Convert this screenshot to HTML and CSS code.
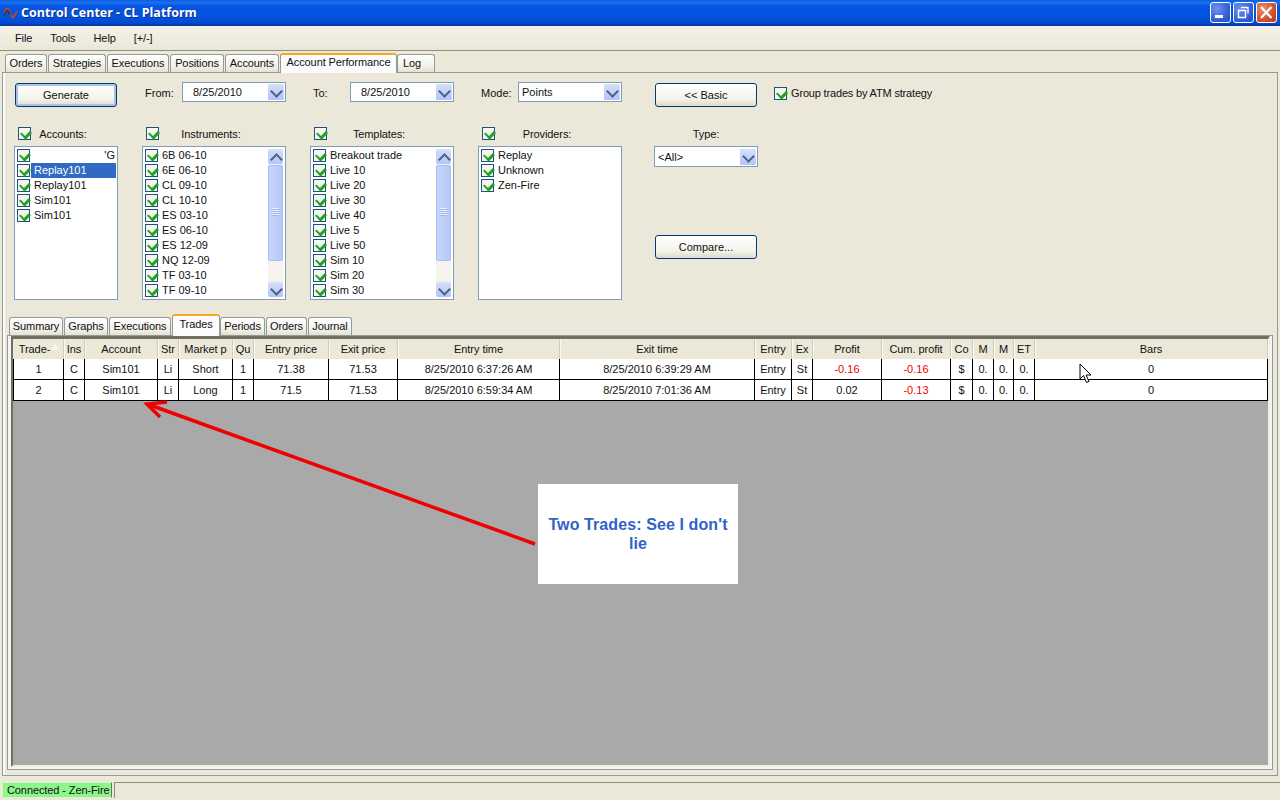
FILE: index.html

```html
<!DOCTYPE html>
<html lang="en">
<head>
    <meta charset="UTF-8">
    <title>Control Center - CL Platform</title>
    <link rel="stylesheet" href="styles.css">
</head>
<body>
<div class="window">
    <div class="titlebar">
        <svg class="app-icon" width="16" height="14" viewBox="0 0 16 14"><path d="M1 8C3 1 5 1 7 7s4 6 7-2" fill="none" stroke="#b5453a" stroke-width="2"/><path d="M1 10C3 3 5 3 7 9" fill="none" stroke="#2b2f55" stroke-width="1.5"/></svg>
        <span class="title-text">Control Center - CL Platform</span>
        <div class="win-buttons">
            <div class="win-btn"><svg width="21" height="21" viewBox="0 0 21 21"><rect x="5" y="13" width="8" height="3" fill="#fff"/></svg></div>
            <div class="win-btn"><svg width="21" height="21" viewBox="0 0 21 21"><path d="M8 5.500h7v6M5.500 8.500h7v7h-7z" fill="none" stroke="#fff" stroke-width="1.400"/></svg></div>
            <div class="win-btn close"><svg width="21" height="21" viewBox="0 0 21 21"><path d="M5 5l10.500 11M15.500 5L5 16" stroke="#fff" stroke-width="2.200"/></svg></div>
        </div>
    </div>

    <div class="menubar">
        <span>File</span>
        <span>Tools</span>
        <span>Help</span>
        <span>[+/-]</span>
    </div>

    <div class="tabs main-tabs">
        <div class="tab">Orders</div>
        <div class="tab">Strategies</div>
        <div class="tab">Executions</div>
        <div class="tab">Positions</div>
        <div class="tab">Accounts</div>
        <div class="tab active">Account Performance</div>
        <div class="tab">Log</div>
    </div>

    <div class="page">
        <div class="filters">
            <div class="cell"><button class="btn default">Generate</button></div>
            <div class="cell field">
                <label>From:</label>
                <div class="combo"><span>8/25/2010</span><i class="drop"></i></div>
            </div>
            <div class="cell field">
                <label>To:</label>
                <div class="combo"><span>8/25/2010</span><i class="drop"></i></div>
            </div>
            <div class="cell field">
                <label>Mode:</label>
                <div class="combo plain"><span>Points</span><i class="drop"></i></div>
            </div>
            <div class="cell"><button class="btn">&lt;&lt; Basic</button></div>
            <div class="cell group-check"><i class="chk"></i><span>Group trades by ATM strategy</span></div>

            <div class="cell column">
                <div class="head"><i class="chk"></i><span>Accounts:</span></div>
                <div class="list">
                    <div class="row"><i class="chk"></i><span class="redact">'G</span></div>
                    <div class="row selected"><i class="chk"></i><span>Replay101</span></div>
                    <div class="row"><i class="chk"></i><span>Replay101</span></div>
                    <div class="row"><i class="chk"></i><span>Sim101</span></div>
                    <div class="row"><i class="chk"></i><span>Sim101</span></div>
                </div>
            </div>
            <div class="cell column">
                <div class="head"><i class="chk"></i><span>Instruments:</span></div>
                <div class="list">
                    <div class="rows">
                        <div class="row"><i class="chk"></i><span>6B 06-10</span></div>
                        <div class="row"><i class="chk"></i><span>6E 06-10</span></div>
                        <div class="row"><i class="chk"></i><span>CL 09-10</span></div>
                        <div class="row"><i class="chk"></i><span>CL 10-10</span></div>
                        <div class="row"><i class="chk"></i><span>ES 03-10</span></div>
                        <div class="row"><i class="chk"></i><span>ES 06-10</span></div>
                        <div class="row"><i class="chk"></i><span>ES 12-09</span></div>
                        <div class="row"><i class="chk"></i><span>NQ 12-09</span></div>
                        <div class="row"><i class="chk"></i><span>TF 03-10</span></div>
                        <div class="row"><i class="chk"></i><span>TF 09-10</span></div>
                    </div>
                    <div class="scrollbar"><i class="sb-btn up"></i><i class="sb-thumb"></i><i class="sb-btn"></i></div>
                </div>
            </div>
            <div class="cell column">
                <div class="head"><i class="chk"></i><span>Templates:</span></div>
                <div class="list">
                    <div class="rows">
                        <div class="row"><i class="chk"></i><span>Breakout trade</span></div>
                        <div class="row"><i class="chk"></i><span>Live 10</span></div>
                        <div class="row"><i class="chk"></i><span>Live 20</span></div>
                        <div class="row"><i class="chk"></i><span>Live 30</span></div>
                        <div class="row"><i class="chk"></i><span>Live 40</span></div>
                        <div class="row"><i class="chk"></i><span>Live 5</span></div>
                        <div class="row"><i class="chk"></i><span>Live 50</span></div>
                        <div class="row"><i class="chk"></i><span>Sim 10</span></div>
                        <div class="row"><i class="chk"></i><span>Sim 20</span></div>
                        <div class="row"><i class="chk"></i><span>Sim 30</span></div>
                    </div>
                    <div class="scrollbar"><i class="sb-btn up"></i><i class="sb-thumb"></i><i class="sb-btn"></i></div>
                </div>
            </div>
            <div class="cell column">
                <div class="head"><i class="chk"></i><span>Providers:</span></div>
                <div class="list">
                    <div class="row"><i class="chk"></i><span>Replay</span></div>
                    <div class="row"><i class="chk"></i><span>Unknown</span></div>
                    <div class="row"><i class="chk"></i><span>Zen-Fire</span></div>
                </div>
            </div>
            <div class="cell column">
                <div class="head centered"><span>Type:</span></div>
                <div class="combo type"><span>&lt;All&gt;</span><i class="drop"></i></div>
                <button class="btn compare">Compare...</button>
            </div>
        </div>

        <div class="tabs sub-tabs">
            <div class="tab">Summary</div>
            <div class="tab">Graphs</div>
            <div class="tab">Executions</div>
            <div class="tab active">Trades</div>
            <div class="tab">Periods</div>
            <div class="tab">Orders</div>
            <div class="tab">Journal</div>
        </div>

        <div class="subpage">
            <div class="grid">
                <div class="grid-row header">
                    <div>Trade-<i class="sort"></i></div><div>Ins</div><div>Account</div><div>Str</div><div>Market p</div><div>Qu</div><div>Entry price</div><div>Exit price</div><div>Entry time</div><div>Exit time</div><div>Entry</div><div>Ex</div><div>Profit</div><div>Cum. profit</div><div>Co</div><div>M</div><div>M</div><div>ET</div><div>Bars</div>
                </div>
                <div class="grid-row">
                    <div>1</div><div>C</div><div>Sim101</div><div>Li</div><div>Short</div><div>1</div><div>71.38</div><div>71.53</div><div>8/25/2010 6:37:26 AM</div><div>8/25/2010 6:39:29 AM</div><div>Entry</div><div>St</div><div class="loss">-0.16</div><div class="loss">-0.16</div><div>$</div><div>0.</div><div>0.</div><div>0.</div><div>0</div>
                </div>
                <div class="grid-row">
                    <div>2</div><div>C</div><div>Sim101</div><div>Li</div><div>Long</div><div>1</div><div>71.5</div><div>71.53</div><div>8/25/2010 6:59:34 AM</div><div>8/25/2010 7:01:36 AM</div><div>Entry</div><div>St</div><div>0.02</div><div class="loss">-0.13</div><div>$</div><div>0.</div><div>0.</div><div>0.</div><div>0</div>
                </div>
            </div>
        </div>
    </div>

    <div class="statusbar">
        <div class="status-conn">Connected - Zen-Fire</div>
        <div class="status-rest"></div>
    </div>

    <!-- annotation pasted over the screenshot -->
    <svg class="arrow" width="420" height="170" viewBox="0 0 420 170">
        <path d="M395 146L10 7" stroke="#f00000" stroke-width="3.500" fill="none"/>
        <path d="M27 4L7 6L20 19" stroke="#f00000" stroke-width="3.500" fill="none"/>
    </svg>
    <div class="note">Two Trades: See I don't lie</div>
    <svg class="cursor" width="13" height="21" viewBox="0 0 13 21"><path d="M1 1v15l3.500-3.500 3 7 2.500-1-3-6.500h5z" fill="#fff" stroke="#000"/></svg>
</div>
</body>
</html>
```

FILE: styles.css

```css
* {
    box-sizing: border-box;
}

html, body {
    margin: 0;
    padding: 0;
    height: 800px;
    overflow: hidden;
}

body {
    font-family: "Liberation Sans", Arial, sans-serif;
    font-size: 11px;
    color: #111;
    background-color: #ece9d8;
}

i {
    display: block;
    font-style: normal;
}

.window {
    position: relative;
    width: 1280px;
    height: 800px;
    background-color: #ece9d8;
}

/* title bar */
.titlebar {
    display: flex;
    align-items: center;
    height: 26px;
    padding: 0 3px 1px 3px;
    background: linear-gradient(#0a5be0 0%, #1a70f0 10%, #0555e0 25%, #0352dd 70%, #0448c8 90%, #02329f 100%);
}

.app-icon {
    margin-right: 2px;
}

.title-text {
    color: #fff;
    font-family: "Open Sans", sans-serif;
    font-weight: bold;
    font-size: 12.5px;
    text-shadow: 1px 1px 0 #0a2f90;
}

.win-buttons {
    display: flex;
    gap: 2px;
    margin-left: auto;
}

.win-btn {
    width: 21px;
    height: 21px;
    border: 1px solid #fff;
    border-radius: 3px;
    overflow: hidden;
    background: radial-gradient(circle at 30% 30%, #6e92ee, #2a55d5 75%);
}

.win-btn svg {
    display: block;
    margin: -1px;
}

.win-btn.close {
    background: radial-gradient(circle at 30% 30%, #eb8f73, #c9411f 75%);
}

/* menu */
.menubar {
    display: flex;
    align-items: center;
    height: 25px;
    padding: 0 0 1px 15px;
    letter-spacing: -0.1px;
    background: linear-gradient(#f3f1e8, #ebe8da);
    border-bottom: 1px solid #918f84;
}

.menubar span {
    margin-right: 18px;
}

/* tabs */
.tabs {
    display: flex;
    align-items: flex-end;
    letter-spacing: -0.1px;
}

.tab {
    height: 18px;
    padding-top: 2px;
    margin-right: 1px;
    white-space: nowrap;
    text-align: center;
    background: linear-gradient(#fff, #f1efe6 70%, #e4e1d2);
    border: 1px solid #919b9c;
    border-bottom: none;
    border-radius: 3px 3px 0 0;
}

.tab.active {
    height: 20px;
    padding-top: 1px;
    margin-bottom: -1px;
    margin-right: 0;
    background: #fcfcfe;
    border-top: 2px solid #f5a623;
    position: relative;
    z-index: 1;
}

.main-tabs {
    height: 21px;
    padding-left: 5px;
}

.main-tabs .tab:nth-child(1) { width: 42px; }
.main-tabs .tab:nth-child(2) { width: 58px; }
.main-tabs .tab:nth-child(3) { width: 62px; }
.main-tabs .tab:nth-child(4) { width: 54px; }
.main-tabs .tab:nth-child(5) { width: 54px; }
.main-tabs .tab:nth-child(6) { width: 117px; }
.main-tabs .tab:nth-child(7) { width: 38px; padding-right: 8px; }

/* outer tab page */
.page {
    height: 704px;
    margin: 0 2px;
    padding: 9px 0 0 0;
    background-color: #ebe8d9;
    border: 1px solid #919b9c;
    box-shadow: inset 2px 0 0 #fbfbf8;
}

.filters {
    display: grid;
    grid-template-columns: 104px 144px 144px 144px 112px 1fr;
    grid-template-rows: 26px 192px;
    column-gap: 24px;
    padding-left: 11px;
}

.filters .cell:nth-child(5), .filters .cell:nth-child(11) {
    margin-left: 8px;
}

.field {
    display: flex;
    align-items: flex-start;
}

.field label {
    width: 40px;
    padding: 5px 0 0 3px;
}

.field .combo {
    flex: 1;
}

.combo {
    display: flex;
    align-items: center;
    justify-content: space-between;
    height: 20px;
    padding: 1px 1px 1px 10px;
    background-color: #fff;
    border: 1px solid #7f9db9;
}

.combo.plain, .combo.type {
    padding-left: 3px;
}

.drop {
    position: relative;
    width: 16px;
    height: 16px;
    background: linear-gradient(#d5e0fc, #b3c5f5);
    border-radius: 1px;
}

.drop::after, .sb-btn::after {
    content: "";
    position: absolute;
    left: 4px;
    top: 3px;
    width: 7px;
    height: 7px;
    border-right: 2px solid #4d6185;
    border-bottom: 2px solid #4d6185;
    transform: rotate(45deg);
}

.btn {
    display: block;
    width: 102px;
    height: 24px;
    margin: 1px 0 0 1px;
    padding: 0;
    font: inherit;
    color: #111;
    background: linear-gradient(#fff, #f3f2ea 70%, #dcd8c8);
    border: 1px solid #003c74;
    border-radius: 3px;
}

.btn.default {
    box-shadow: inset 0 0 0 2px #a9c0e8;
}

.group-check {
    display: flex;
    align-items: center;
    gap: 4px;
    height: 22px;
    margin-left: -8px;
    letter-spacing: -0.17px;
}

.chk {
    position: relative;
    flex: none;
    width: 13px;
    height: 13px;
    background-color: #f6f6f0;
    border: 1px solid #1c5180;
}

.chk::after {
    content: "";
    position: absolute;
    left: 3px;
    top: 1px;
    width: 5px;
    height: 7px;
    border-right: 3px solid #21a121;
    border-bottom: 2px solid #21a121;
    transform: rotate(45deg);
}

.column {
    margin-top: 19px;
}

.head {
    display: flex;
    align-items: center;
    height: 13px;
    margin: 0 0 6px 4px;
    letter-spacing: -0.1px;
}

.head span {
    flex: 1;
    text-align: center;
    padding-right: 23px;
}

.head.centered {
    margin-left: 0;
}

.head.centered span {
    padding: 0;
}

.list {
    display: flex;
    flex-direction: column;
    position: relative;
    height: 154px;
    padding: 1px;
    overflow: hidden;
    background-color: #fff;
    border: 1px solid #7f9db9;
}

.list:has(.scrollbar) {
    flex-direction: row;
    justify-content: space-between;
}

.row {
    display: flex;
    align-items: center;
    gap: 1px;
    height: 15px;
    padding-left: 1px;
}

.row span {
    flex: 1;
    line-height: 15px;
    padding-left: 3px;
}

.row.selected span {
    color: #fff;
    background-color: #316ac5;
}

/* someone rubbed out the first account name */
.row .redact {
    text-align: right;
    padding-right: 1px;
    background-color: #fff;
}

.rows {
    flex: 1;
}

.scrollbar {
    display: flex;
    flex-direction: column;
    flex: none;
    width: 15px;
    margin: 1px 1px 1px 0;
    background-color: #f4f4ec;
}

.sb-btn {
    position: relative;
    height: 15px;
    margin-top: auto;
    background: linear-gradient(#d5e0fc, #b3c5f5);
    border-radius: 2px;
}

.sb-btn.up {
    margin-top: 0;
}

.sb-btn.up::after {
    top: 6px;
    transform: rotate(225deg);
}

.sb-thumb {
    height: 96px;
    margin-top: 1px;
    background: linear-gradient(90deg, #c9d6fb, #b5c8f7);
    border: 1px solid #a6bbef;
    border-radius: 2px;
    position: relative;
}

.sb-thumb::after {
    content: "";
    position: absolute;
    left: 3px;
    top: 42px;
    width: 7px;
    height: 8px;
    background: repeating-linear-gradient(#eef2fe 0 1px, #9db2ea 1px 2px);
}

.combo.type {
    height: 21px;
}

.btn.compare {
    margin-top: 68px;
}

/* lower tabs */
.sub-tabs {
    height: 21px;
    padding-left: 6px;
    margin-top: 14px;
}

.sub-tabs .tab.active {
    height: 22px;
    padding-top: 2px;
}

.sub-tabs .tab:nth-child(1) { width: 54px; }
.sub-tabs .tab:nth-child(2) { width: 44px; }
.sub-tabs .tab:nth-child(3) { width: 62px; }
.sub-tabs .tab:nth-child(4) { width: 48px; }
.sub-tabs .tab:nth-child(5) { width: 45px; }
.sub-tabs .tab:nth-child(6) { width: 41px; }
.sub-tabs .tab:nth-child(7) { width: 44px; }

.subpage {
    height: 435px;
    margin: 0 4px;
    padding: 0 2px 2px 3px;
    background-color: #f6f5ee;
    border: 1px solid #919b9c;
}

.grid {
    height: 100%;
    background-color: #a9a9a9;
    border-top: 3px solid #716f64;
    border-left: 2px solid #716f64;
    border-right: 2px solid #f1efe2;
    border-bottom: 2px solid #f1efe2;
}

.grid-row {
    display: grid;
    grid-template-columns: 50px 21px 73px 21px 54px 21px 75px 69px 162px 195px 37px 21px 69px 69px 22px 21px 20px 21px 233px;
    height: 21px;
    background-color: #fff;
    border-left: 1px solid #000;
    border-bottom: 1px solid #000;
}

.grid-row > div {
    line-height: 20px;
    text-align: center;
    white-space: nowrap;
    overflow: hidden;
    border-right: 1px solid #000;
}

.grid-row.header {
    height: 20px;
    background-color: #ebe8d8;
    border: none;
    padding-left: 1px;
    letter-spacing: -0.05px;
}

.grid-row.header > div {
    position: relative;
    line-height: 20px;
    border-right: 1px solid #cfccbc;
    box-shadow: 1px 0 0 #fbfbf6;
}

.grid-row.header > div:first-child {
    padding-right: 8px;
}

.sort {
    position: absolute;
    right: 4px;
    top: 5px;
    width: 0;
    height: 0;
    border-left: 4px solid transparent;
    border-right: 4px solid transparent;
    border-bottom: 6px solid #f7f6f0;
}

.loss {
    color: #f00000;
}

/* status bar */
.statusbar {
    display: flex;
    gap: 2px;
    height: 16px;
    margin-top: 6px;
    padding-left: 2px;
}

.status-conn {
    width: 110px;
    padding-left: 4px;
    line-height: 14px;
    background-color: #8cf58c;
    border: 1px solid #d6f5c8;
    border-right-color: #716f64;
    white-space: nowrap;
    letter-spacing: -0.1px;
}

.status-rest {
    flex: 1;
    border-top: 1px solid #8f8d80;
    border-left: 1px solid #8f8d80;
    background-color: #ebe8d8;
}

/* things lying over the window */
.arrow {
    position: absolute;
    left: 140px;
    top: 398px;
}

.note {
    position: absolute;
    left: 538px;
    top: 484px;
    display: flex;
    align-items: center;
    justify-content: center;
    width: 200px;
    height: 100px;
    padding: 0 8px;
    text-align: center;
    font-size: 16px;
    font-weight: bold;
    line-height: 19px;
    letter-spacing: 0.1px;
    color: #3162c9;
    background-color: #fff;
}

.cursor {
    position: absolute;
    left: 1079px;
    top: 363px;
}
```
